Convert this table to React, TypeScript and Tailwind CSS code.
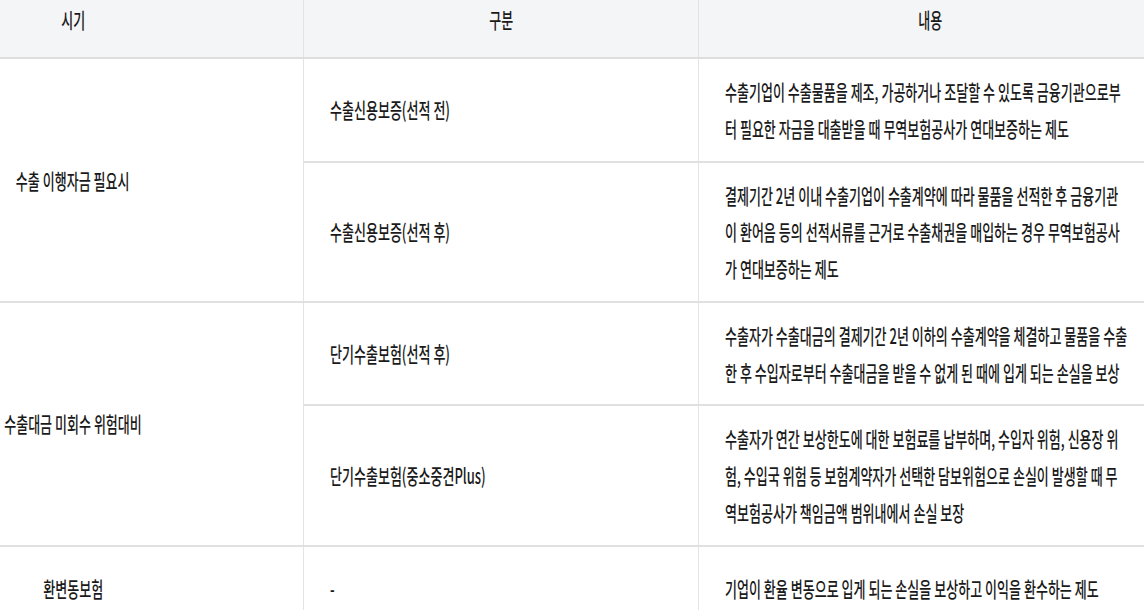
import React from "react";

const LINE = "block origin-left scale-x-[0.62] whitespace-nowrap";
const CENTER = "shrink-0 whitespace-nowrap scale-x-[0.62]";

function Col1({ text }: { text: string }) {
  return (
    <div className="w-[304px] shrink-0 border-r border-[#e3e3e3] pr-[157px] flex items-center justify-center">
      <span className={CENTER}>{text}</span>
    </div>
  );
}

function SubRow({ label, lines, last }: { label: string; lines: string[]; last?: boolean }) {
  return (
    <div className={last ? "flex" : "flex border-b-2 border-[#e0e0e0]"}>
      <div className="w-[395px] shrink-0 border-r border-[#e3e3e3] pl-[26px] flex items-center">
        <span className={LINE}>{label}</span>
      </div>
      <div className="w-[462px] shrink-0 pl-[26px] py-[14px]">
        {lines.map((l, i) => (
          <span key={i} className={LINE}>
            {l}
          </span>
        ))}
      </div>
    </div>
  );
}

export default function App() {
  return (
    <div className="w-[1144px] h-[610px] overflow-hidden bg-white font-['Noto_Sans_CJK_KR','Noto_Sans',sans-serif] text-[21px] font-medium leading-[36.75px] text-[#1a1a1a]">
      <div className="flex w-[1161px] h-[59px] bg-[#f4f5f7] border-b-2 border-[#dedede]">
        <div className="w-[304px] shrink-0 border-r border-[#e3e3e3] pr-[157px] flex justify-center pt-[1px]">
          <span className={CENTER}>시기</span>
        </div>
        <div className="w-[395px] shrink-0 border-r border-[#e3e3e3] flex justify-center pt-[1px]">
          <span className={CENTER}>구분</span>
        </div>
        <div className="w-[462px] shrink-0 flex justify-center pt-[1px]">
          <span className={CENTER}>내용</span>
        </div>
      </div>

      <div className="flex border-b-2 border-[#e0e0e0]">
        <Col1 text="수출 이행자금 필요시" />
        <div className="flex flex-col">
          <SubRow
            label="수출신용보증(선적 전)"
            lines={[
              "수출기업이 수출물품을 제조, 가공하거나 조달할 수 있도록 금융기관으로부",
              "터 필요한 자금을 대출받을 때 무역보험공사가 연대보증하는 제도",
            ]}
          />
          <SubRow
            last
            label="수출신용보증(선적 후)"
            lines={[
              "결제기간 2년 이내 수출기업이 수출계약에 따라 물품을 선적한 후 금융기관",
              "이 환어음 등의 선적서류를 근거로 수출채권을 매입하는 경우 무역보험공사",
              "가 연대보증하는 제도",
            ]}
          />
        </div>
      </div>

      <div className="flex border-b-2 border-[#e0e0e0]">
        <Col1 text="수출대금 미회수 위험대비" />
        <div className="flex flex-col">
          <SubRow
            label="단기수출보험(선적 후)"
            lines={[
              "수출자가 수출대금의 결제기간 2년 이하의 수출계약을 체결하고 물품을 수출",
              "한 후 수입자로부터 수출대금을 받을 수 없게 된 때에 입게 되는 손실을 보상",
            ]}
          />
          <SubRow
            last
            label="단기수출보험(중소중견Plus)"
            lines={[
              "수출자가 연간 보상한도에 대한 보험료를 납부하며, 수입자 위험, 신용장 위",
              "험, 수입국 위험 등 보험계약자가 선택한 담보위험으로 손실이 발생할 때 무",
              "역보험공사가 책임금액 범위내에서 손실 보장",
            ]}
          />
        </div>
      </div>

      <div className="flex">
        <div className="w-[304px] shrink-0 border-r border-[#e3e3e3] pr-[157px] flex justify-center pt-[23px] pb-[23px]">
          <span className={CENTER}>환변동보험</span>
        </div>
        <div className="w-[395px] shrink-0 border-r border-[#e3e3e3] pl-[26px] pt-[23px] pb-[23px]">
          <span className={LINE}>-</span>
        </div>
        <div className="w-[462px] shrink-0 pl-[26px] pt-[23px] pb-[23px]">
          <span className={LINE}>기업이 환율 변동으로 입게 되는 손실을 보상하고 이익을 환수하는 제도</span>
        </div>
      </div>
    </div>
  );
}
